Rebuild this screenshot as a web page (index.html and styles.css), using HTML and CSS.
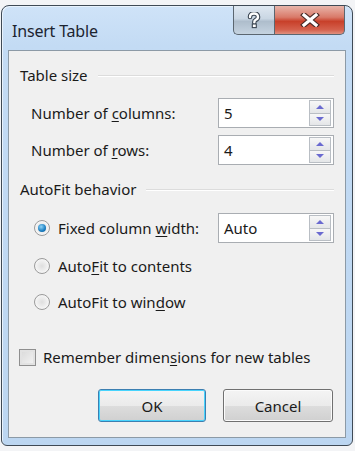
FILE: index.html
```html
<html>
<head>
    <link rel="stylesheet" href="styles.css">
</head>
<body>
    <div class="window">
        <div class="titlebar">
            <span class="title">Insert Table</span>
            <div class="caption-buttons">
                <div class="cap-btn help">
                    <svg width="14" height="17" viewBox="0 0 14 17">
                        <path d="M3 5 Q3 1.5 7 1.5 Q11 1.5 11 5 Q11 7 8.5 8 Q7.3 8.6 7.3 10.5" fill="none" stroke="#3b4652" stroke-width="4.6" stroke-linecap="round"/>
                        <path d="M3 5 Q3 1.5 7 1.5 Q11 1.5 11 5 Q11 7 8.5 8 Q7.3 8.6 7.3 10.5" fill="none" stroke="#fff" stroke-width="2.4" stroke-linecap="round"/>
                        <rect x="5.3" y="12" width="4" height="3.6" fill="#fff" stroke="#3b4652" stroke-width="1.1"/>
                    </svg>
                </div>
                <div class="cap-btn close">
                    <svg width="20" height="14" viewBox="0 0 20 14">
                        <path d="M4 2 L16 12 M16 2 L4 12" stroke="#4a2a26" stroke-width="5.5" stroke-linecap="square"/>
                        <path d="M4 2 L16 12 M16 2 L4 12" stroke="#fff" stroke-width="3.2" stroke-linecap="square"/>
                    </svg>
                </div>
            </div>
        </div>

        <div class="panel">
            <div class="group-head">
                <span>Table size</span>
                <div class="rule"></div>
            </div>
            <div class="field-row first">
                <label>Number of <u>c</u>olumns:</label>
                <div class="spin">
                    <span class="value">5</span>
                    <div class="arrows"><div class="arr up"></div><div class="arr down"></div></div>
                </div>
            </div>
            <div class="field-row">
                <label>Number of <u>r</u>ows:</label>
                <div class="spin">
                    <span class="value">4</span>
                    <div class="arrows"><div class="arr up"></div><div class="arr down"></div></div>
                </div>
            </div>

            <div class="group-head second">
                <span>AutoFit behavior</span>
                <div class="rule"></div>
            </div>
            <div class="radio-row first">
                <span class="radio on"></span>
                <label>Fixed column <u>w</u>idth:</label>
                <div class="spin">
                    <span class="value">Auto</span>
                    <div class="arrows"><div class="arr up"></div><div class="arr down"></div></div>
                </div>
            </div>
            <div class="radio-row r2">
                <span class="radio"></span>
                <label>Auto<u>F</u>it to contents</label>
            </div>
            <div class="radio-row r3">
                <span class="radio"></span>
                <label>AutoFit to win<u>d</u>ow</label>
            </div>

            <div class="check-row">
                <span class="check"></span>
                <label>Remember dimen<u>s</u>ions for new tables</label>
            </div>

            <div class="buttons">
                <div class="btn default">OK</div>
                <div class="btn">Cancel</div>
            </div>
        </div>
    </div>
</body>
</html>
```

FILE: styles.css
```css
html, body{
    margin: 0;
    padding: 0;
    width: 100%;
    height: 100%;
    background: #f3f4f6;
}
body{
    font-family: "Noto Sans", "DejaVu Sans", sans-serif;
    font-size: 15px;
    color: #1a1a1a;
}
u{
    text-decoration: underline;
    text-underline-offset: 2px;
}
.window{
    margin: 5px 2px 0 1px;
    height: 441px;
    box-sizing: border-box;
    border: 1px solid #3f4a55;
    border-radius: 8px 8px 6px 6px;
    background: linear-gradient(to bottom, #cfe3f8 0, #c3dbf4 40px, #bcd6f1 100%);
    padding: 0 6px 0 6px;
    display: flex;
    flex-direction: column;
    box-shadow: inset 1px 1px 0 #e8f2fc;
}
.titlebar{
    height: 44px;
    display: flex;
    justify-content: space-between;
    align-items: flex-start;
}
.title{
    margin: 14px 0 0 4px;
    font-size: 16px;
    color: #1c2430;
    letter-spacing: -0.2px;
}
.caption-buttons{
    display: flex;
    margin-right: 1px;
}
.cap-btn{
    height: 29px;
    display: flex;
    align-items: center;
    justify-content: center;
    border: 1px solid #5b6670;
    border-top: none;
    box-sizing: border-box;
}
.help{
    width: 41px;
    border-radius: 0 0 0 5px;
    border-right: none;
    background: linear-gradient(to bottom, #dfe8f1 0, #c9d6e3 45%, #aebdcc 55%, #c5d3e0 100%);
}
.close{
    width: 71px;
    border-radius: 0 0 5px 0;
    background: linear-gradient(to bottom, #e8b5aa 0, #d97a69 40%, #c8402a 55%, #d4614d 85%, #e0907f 100%);
}
.panel{
    flex: 1;
    margin-bottom: 7px;
    border: 1px solid #8c9aa6;
    background: #f0f0f0;
    padding: 14px 11px 0 11px;
}
.group-head{
    display: flex;
    align-items: center;
    height: 20px;
}
.group-head.second{
    margin-top: 14px;
}
.rule{
    flex: 1;
    height: 1px;
    background: #dcdcdc;
    margin: 1px 0 0 10px;
    box-shadow: 0 1px 0 #fff;
}
.field-row, .radio-row{
    display: flex;
    align-items: center;
    height: 30px;
    margin-top: 7px;
}
.field-row{
    padding-left: 11px;
}
.field-row.first{
    margin-top: 13px;
}
.field-row label, .radio-row label{
    flex: 1;
}
.spin{
    width: 116px;
    height: 30px;
    box-sizing: border-box;
    border: 1px solid #a9adb2;
    background: #fff;
    display: flex;
    align-items: center;
    padding: 0 2px 0 5px;
}
.value{
    flex: 1;
}
.arrows{
    width: 22px;
    height: 26px;
    display: flex;
    flex-direction: column;
}
.arr{
    flex: 1;
    border: 1px solid #b9bec4;
    background: linear-gradient(to bottom, #f7f7f7, #e4e6e8);
    display: flex;
    align-items: center;
    justify-content: center;
}
.arr + .arr{
    border-top: none;
}
.arr.up::after{
    content: "";
    border-left: 4px solid transparent;
    border-right: 4px solid transparent;
    border-bottom: 4px solid #6a6ad0;
}
.arr.down::after{
    content: "";
    border-left: 4px solid transparent;
    border-right: 4px solid transparent;
    border-top: 4px solid #6a6ad0;
}
.radio-row{
    padding-left: 14px;
}
.radio-row.first{
    margin-top: 14px;
}
.radio-row.r2{
    margin-top: 8px;
}
.radio-row.r3{
    margin-top: 6px;
}
.radio{
    width: 16px;
    height: 16px;
    box-sizing: border-box;
    border-radius: 50%;
    border: 1px solid #9a9a9a;
    background: radial-gradient(circle at 50% 50%, #dedede 0, #f6f6f6 70%);
    margin-right: 8px;
    display: flex;
    align-items: center;
    justify-content: center;
}
.radio.on::after{
    content: "";
    width: 8px;
    height: 8px;
    border-radius: 50%;
    background: radial-gradient(circle at 40% 35%, #8fd3f5 0, #1a7ec2 60%, #0c4f86 100%);
}
.check-row{
    display: flex;
    align-items: center;
    height: 20px;
    margin-top: 30px;
}
.check{
    width: 17px;
    height: 17px;
    box-sizing: border-box;
    border: 1px solid #8f8f8f;
    background: linear-gradient(135deg, #d8d8d8, #f4f4f4);
    box-shadow: inset 0 0 0 2px #e2e2e2;
    margin: 0 7px 0 -1px;
}
.buttons{
    display: flex;
    justify-content: flex-end;
    gap: 17px;
    margin: 22px 1px 0 0;
}
.btn{
    width: 110px;
    height: 33px;
    box-sizing: border-box;
    border: 1px solid #707070;
    border-radius: 3px;
    background: linear-gradient(to bottom, #f4f4f4 0, #ebebeb 50%, #dddddd 51%, #d0d0d0 100%);
    display: flex;
    align-items: center;
    justify-content: center;
    box-shadow: inset 0 0 0 1px #fbfbfb;
}
.btn.default{
    width: 108px;
    border-color: #3c7fb1;
    box-shadow: inset 0 0 0 1px #48d4fd;
}
```
